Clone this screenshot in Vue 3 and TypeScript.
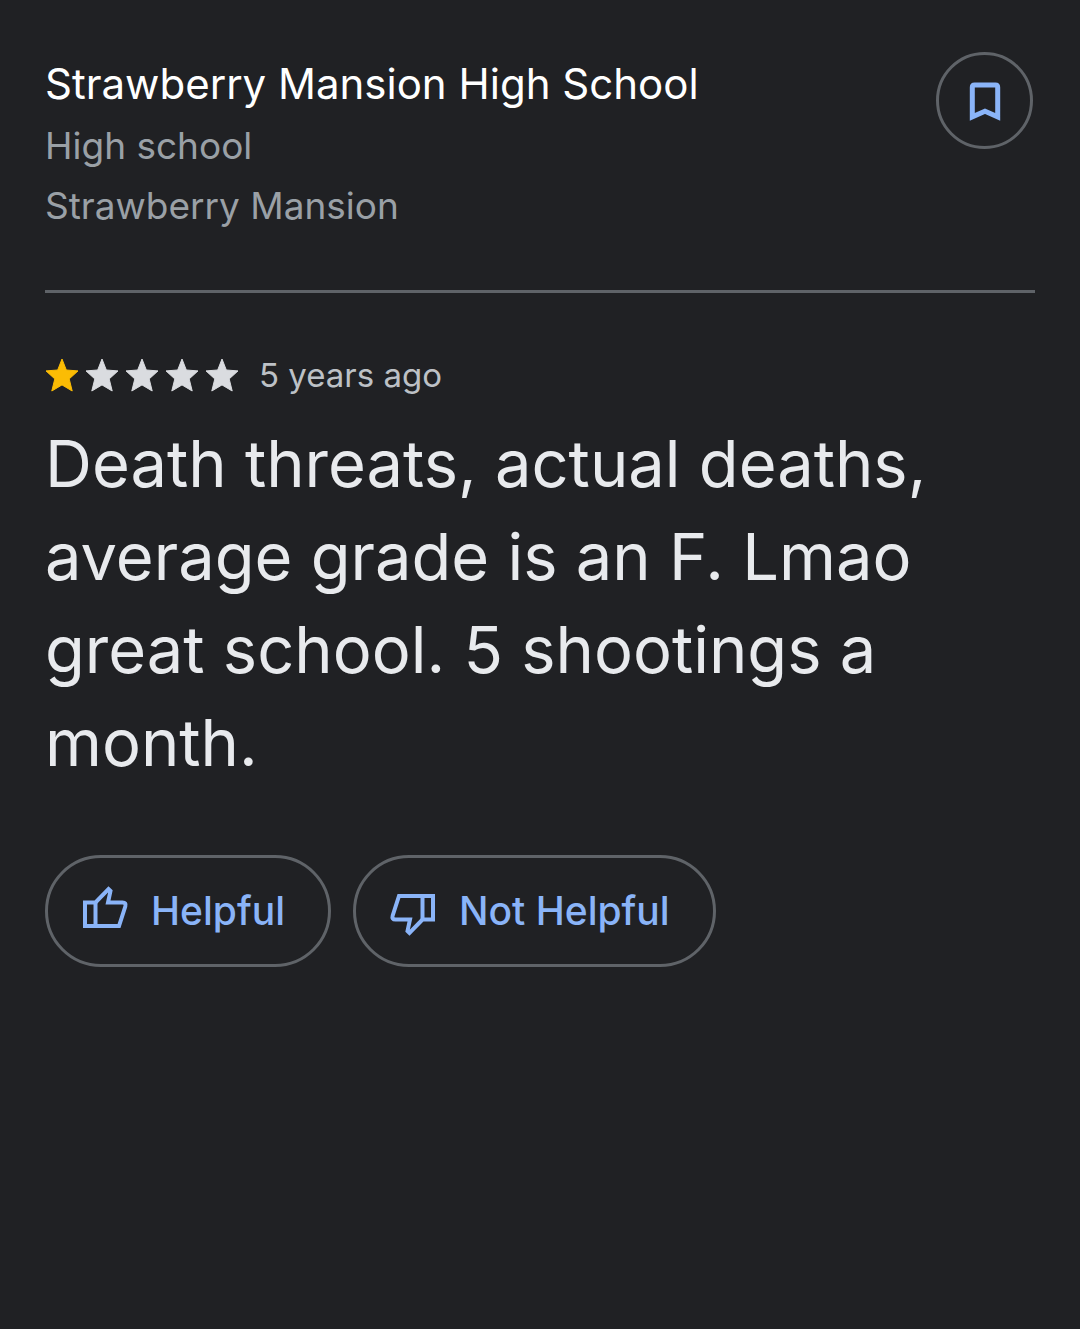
<script setup lang="ts">
import { ref } from 'vue'

type Vote = 'up' | 'down'

const place = {
  name: 'Strawberry Mansion High School',
  category: 'High school',
  area: 'Strawberry Mansion',
}

const review = {
  rating: 1,
  age: '5 years ago',
  text: 'Death threats, actual deaths, average grade is an F. Lmao great school. 5 shootings a month.',
}

const votes: { id: Vote; label: string }[] = [
  { id: 'up', label: 'Helpful' },
  { id: 'down', label: 'Not Helpful' },
]

const saved = ref(false)
const vote = ref<Vote | null>(null)
</script>

<template>
  <main class="page">
    <header class="place">
      <div class="place-info">
        <h1 class="name">{{ place.name }}</h1>
        <p class="detail">{{ place.category }}</p>
        <p class="detail">{{ place.area }}</p>
      </div>
      <button class="save" type="button" aria-label="Save" :aria-pressed="saved" @click="saved = !saved">
        <svg class="save-icon" viewBox="0 0 32 40" aria-hidden="true">
          <path d="M3.300 35.800V6.200Q3.300 4 5.500 4H26.500Q28.700 4 28.700 6.200V35.800L16 30.200Z" />
        </svg>
      </button>
    </header>

    <article class="review">
      <div class="meta">
        <div class="stars" role="img" :aria-label="`${review.rating} out of 5 stars`">
          <svg
            v-for="n in 5"
            :key="n"
            class="star"
            :class="{ filled: n <= review.rating }"
            viewBox="0 0 34 34"
            aria-hidden="true"
          >
            <path d="M17 1 21.300 12 33 12.900 24.200 20.900 27.200 33 17 26.900 6.800 33 9.800 20.900 1 12.900 12.700 12Z" />
          </svg>
        </div>
        <span class="age">{{ review.age }}</span>
      </div>
      <p class="text">{{ review.text }}</p>
      <div class="votes">
        <button
          v-for="v in votes"
          :key="v.id"
          class="vote"
          type="button"
          :aria-pressed="vote === v.id"
          @click="vote = v.id"
        >
          <svg class="thumb" :class="v.id" viewBox="0 0 48 54" aria-hidden="true">
            <path d="M4 18.500H14.500L27.500 5L29.500 7L27 18.500H41.500Q45.500 18.500 44.300 22.500L38 42H4Z" />
            <path d="M14.500 18.500V42" />
          </svg>
          <span>{{ v.label }}</span>
        </button>
      </div>
    </article>
  </main>
</template>

<style>
body {
  margin: 0;
  background: #202124;
}
</style>

<style scoped>
.page {
  box-sizing: border-box;
  min-height: 100vh;
  padding: 52px 45px;
  background: #202124;
  font-family: Inter, Roboto, sans-serif;
}

.place {
  display: flex;
  justify-content: space-between;
  align-items: flex-start;
  padding: 0 2px 54px 0;
}

.name,
.detail,
.text {
  margin: 0;
}

.name {
  font-size: 42px;
  font-weight: 400;
  line-height: 64px;
  color: #fff;
}

.detail {
  font-size: 37px;
  line-height: 60px;
  color: #9aa0a6;
}

.save {
  display: flex;
  flex: none;
  align-items: center;
  justify-content: center;
  width: 97px;
  height: 97px;
  padding: 0;
  border: 3px solid #5f6368;
  border-radius: 50%;
  background: none;
}

.save-icon {
  width: 32px;
  height: 40px;
  fill: none;
  stroke: #8ab4f8;
  stroke-width: 5;
}

.review {
  border-top: 3px solid #5f6368;
  padding-top: 58px;
}

.meta {
  display: flex;
  align-items: center;
  gap: 20px;
  height: 48px;
}

.stars {
  display: flex;
  gap: 6px;
}

.star {
  width: 34px;
  height: 34px;
  fill: #dadce0;
  stroke: #dadce0;
  stroke-width: 1;
  stroke-linejoin: round;
}

.star.filled {
  fill: #fbbc04;
  stroke: #fbbc04;
}

.age {
  font-size: 33px;
  line-height: 48px;
  color: #bdc1c6;
}

.text {
  padding-top: 18px;
  font-size: 65px;
  line-height: 93px;
  color: #e8eaed;
}

.votes {
  display: flex;
  flex-wrap: wrap;
  gap: 22px;
  padding-top: 66px;
}

.vote {
  display: flex;
  align-items: center;
  gap: 22px;
  height: 112px;
  padding: 0 43px 0 33px;
  border: 3px solid #5f6368;
  border-radius: 56px;
  background: none;
  font: 500 39px/56px Inter, Roboto, sans-serif;
  color: #8ab4f8;
}

.thumb {
  width: 48px;
  height: 54px;
  fill: none;
  stroke: #8ab4f8;
  stroke-width: 4;
}

.thumb.down {
  transform: rotate(180deg);
}
</style>
